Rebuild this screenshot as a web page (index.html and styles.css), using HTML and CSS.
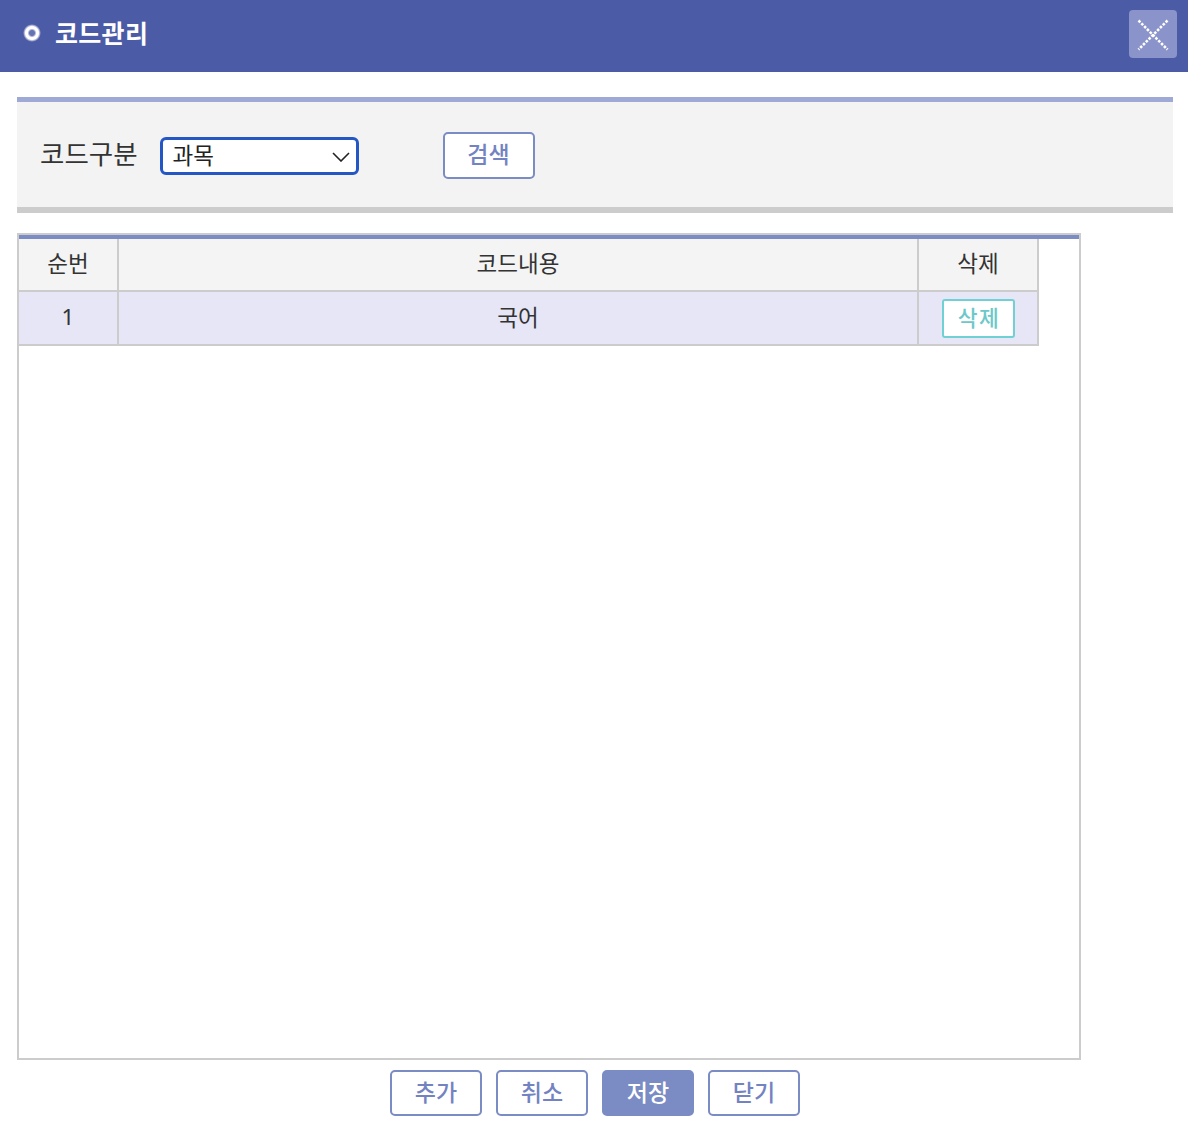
FILE: index.html
```html
<!DOCTYPE html>
<html lang="ko">
<head>
<meta charset="utf-8">
<title>코드관리</title>
<link rel="stylesheet" href="styles.css">
</head>
<body>
<header class="titlebar">
  <div class="title">
    <span class="bullet"></span>
    <h1>코드관리</h1>
  </div>
  <button class="close" aria-label="닫기">
    <svg width="48" height="48" viewBox="0 0 48 48">
      <line x1="9.5" y1="10.5" x2="38.5" y2="39.5" stroke="#fff" stroke-width="2.6" stroke-dasharray="2.6 1.4"/>
      <line x1="38.5" y1="10.5" x2="9.5" y2="39.5" stroke="#fff" stroke-width="2.6" stroke-dasharray="2.6 1.4"/>
    </svg>
  </button>
</header>
<main class="content">
  <section class="search">
    <span class="label">코드구분</span>
    <div class="select">
      <span>과목</span>
      <svg width="18" height="10" viewBox="0 0 18 10"><polyline points="1,1 9,9 17,1" fill="none" stroke="#222" stroke-width="1.6"/></svg>
    </div>
    <button class="btn search-btn">검색</button>
  </section>
  <section class="grid">
    <div class="grid-top">
      <table>
        <thead>
          <tr><th class="c1">순번</th><th class="c2">코드내용</th><th class="c3">삭제</th></tr>
        </thead>
        <tbody>
          <tr><td>1</td><td>국어</td><td><button class="del">삭제</button></td></tr>
        </tbody>
      </table>
    </div>
  </section>
  <div class="actions">
    <button class="btn">추가</button>
    <button class="btn">취소</button>
    <button class="btn primary">저장</button>
    <button class="btn">닫기</button>
  </div>
</main>
</body>
</html>
```
FILE: styles.css
```css
* { box-sizing: border-box; }
html, body { margin: 0; padding: 0; background: #fff; }
body {
  font-family: "Noto Sans", "Noto Sans CJK KR", sans-serif;
  color: #333;
}
button { font-family: inherit; cursor: pointer; }

.titlebar {
  height: 72px;
  background: #4c5ba6;
  display: flex;
  align-items: center;
  justify-content: space-between;
  padding: 0 11px 0 23px;
}
.title { display: flex; align-items: center; gap: 14px; margin-top: -9px; }
.bullet {
  width: 18px; height: 18px; border-radius: 50%;
  background: radial-gradient(circle, #6573b4 0 2.5px, #fff 4.5px 6.5px, rgba(255,255,255,0) 9px);
  margin-top: 3px;
}
.title h1 {
  margin: 0;
  font-size: 25px;
  font-weight: 700;
  color: #fff;
  letter-spacing: 0.3px;
}
.close {
  width: 48px; height: 48px;
  padding: 0; border: none;
  border-radius: 4px;
  background: #8a94ca;
  display: flex; align-items: center; justify-content: center;
  margin-top: -5px;
}

.content { padding: 25px 15px 0 17px; }

.search {
  height: 116px;
  background: #f3f3f3;
  border-top: 5px solid #9ea9d5;
  border-bottom: 6px solid #cccccc;
  display: flex;
  align-items: center;
  padding-left: 23px;
}
.label { font-size: 26.5px; color: #333; margin-right: 22px; padding-bottom: 4px; }
.select {
  width: 199px; height: 38px;
  border: 3px solid #2456c4;
  border-radius: 6px;
  background: #fff;
  display: flex; align-items: center; justify-content: space-between;
  padding: 0 6px 3px 10px;
  font-size: 22.5px;
  color: #222;
  margin-top: 3px;
}
.select svg { margin-top: 4px; }

.btn {
  width: 92px; height: 46px;
  border: 2px solid #7b8bc4;
  border-radius: 5px;
  background: #fff;
  color: #7383c2;
  font-size: 23px;
  font-weight: 500;
  padding: 0 0 4px;
}
.search-btn { margin-left: 84px; height: 47px; margin-top: 1px; }

.grid {
  margin-top: 20px;
  width: 1064px;
  height: 827px;
  border: 2px solid #cccccc;
}
.grid-top { border-top: 4px solid #7b8bc4; }
table {
  border-collapse: separate;
  border-spacing: 0;
  width: 1020px;
  table-layout: fixed;
}
th, td {
  border-right: 2px solid #cccccc;
  border-bottom: 2px solid #cccccc;
  text-align: center;
  font-size: 22.5px;
  font-weight: 400;
  color: #333;
  padding: 0 0 4px;
}
th { background: #f4f4f4; height: 53px; }
td { background: #e6e6f7; height: 54px; }
.c1 { width: 100px; }
.c2 { width: 800px; }
.c3 { width: 120px; }
.del {
  width: 73px; height: 39px;
  border: 2px solid #70d0d3;
  border-radius: 3px;
  background: #fff;
  color: #6cc8ca;
  font-size: 21.5px;
  font-weight: 500;
  letter-spacing: 1.5px;
  padding: 0 0 3px 2px;
  vertical-align: middle;
  margin-top: 4px;
}

.actions {
  display: flex;
  justify-content: center;
  gap: 14px;
  margin-top: 10px;
}
.btn.primary { background: #7b8bc4; color: #fff; border-color: #7b8bc4; }
```
